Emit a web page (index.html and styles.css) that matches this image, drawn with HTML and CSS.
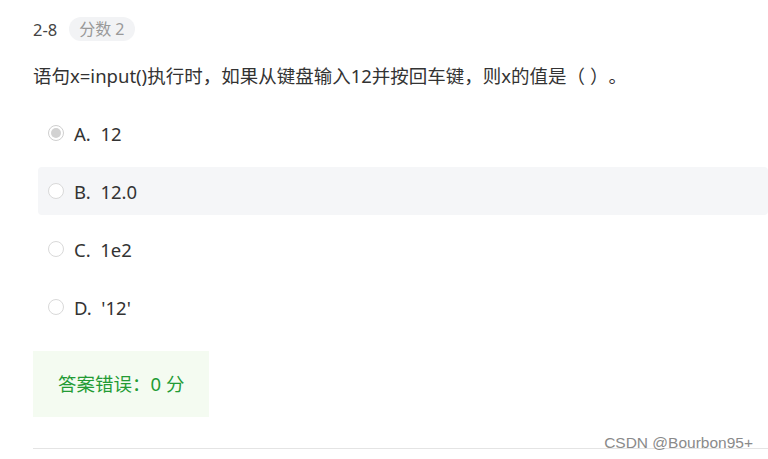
FILE: index.html
```html
<!DOCTYPE html>
<html lang="zh-CN">
<head>
    <meta charset="UTF-8">
    <meta name="viewport" content="width=device-width, initial-scale=1.0">
    <title>2-8 单选题</title>
    <link rel="stylesheet" href="styles.css">
</head>
<body>
    <div class="question">
        <div class="head">
            <span class="num">2-8</span>
            <span class="score">分数 2</span>
        </div>
        <p class="stem">语句x=input()执行时，如果从键盘输入12并按回车键，则x的值是（ ）。</p>
        <div class="options">
            <div class="option">
                <span class="radio checked"></span>
                <span class="label">A.&nbsp; 12</span>
            </div>
            <div class="option hover">
                <span class="radio"></span>
                <span class="label">B.&nbsp; 12.0</span>
            </div>
            <div class="option">
                <span class="radio"></span>
                <span class="label">C.&nbsp; 1e2</span>
            </div>
            <div class="option">
                <span class="radio"></span>
                <span class="label">D.&nbsp; '12'</span>
            </div>
        </div>
        <div class="result">答案错误：0 分</div>
        <div class="divider"></div>
    </div>
    <div class="mark">CSDN @Bourbon95+</div>
</body>
</html>
```

FILE: styles.css
```css
body {
    margin: 0;
    background-color: #fff;
    font-family: "Noto Sans", "Noto Sans CJK SC", sans-serif;
    color: #333;
    text-spacing-trim: space-all;
}
.question {
    padding: 17px 0 0 33px;
}
.head {
    display: flex;
    align-items: center;
    height: 24px;
}
.num {
    font-size: 16.5px;
    color: #444;
}
.score {
    margin-left: 12px;
    height: 24px;
    line-height: 24px;
    padding: 0 10px;
    border-radius: 12px;
    background-color: #f2f3f5;
    color: #999;
    font-size: 16px;
}
.stem {
    margin: 23px 0 0;
    font-size: 18.5px;
    line-height: 24px;
    color: #333;
}
.options {
    margin-top: 21px;
    display: flex;
    flex-direction: column;
    gap: 10px;
}
.option {
    display: flex;
    align-items: center;
    height: 48px;
    margin-left: 5px;
    padding-left: 10px;
    border-radius: 4px;
}
.option.hover {
    background-color: #f5f6f8;
}
.radio {
    width: 16px;
    height: 16px;
    border: 1px solid #d9d9d9;
    border-radius: 50%;
    background-color: #fff;
    box-sizing: border-box;
    display: flex;
    align-items: center;
    justify-content: center;
}
.radio.checked {
    border-color: #cfcfcf;
}
.radio.checked::after {
    content: "";
    width: 10px;
    height: 10px;
    border-radius: 50%;
    background-color: #d2d2d2;
}
.label {
    margin-left: 10px;
    font-size: 18.5px;
    color: #333;
}
.result {
    display: inline-block;
    margin-top: 20px;
    padding: 21px 25px;
    background-color: #f4fbf1;
    color: #239b34;
    font-size: 18.5px;
    line-height: 24px;
}
.divider {
    margin-top: 31px;
    border-top: 1px solid #e4e4e4;
}
.mark {
    position: absolute;
    right: 15px;
    top: 434px;
    font-family: "Liberation Sans", sans-serif;
    font-size: 15.5px;
    color: #8a8a8a;
}
```
